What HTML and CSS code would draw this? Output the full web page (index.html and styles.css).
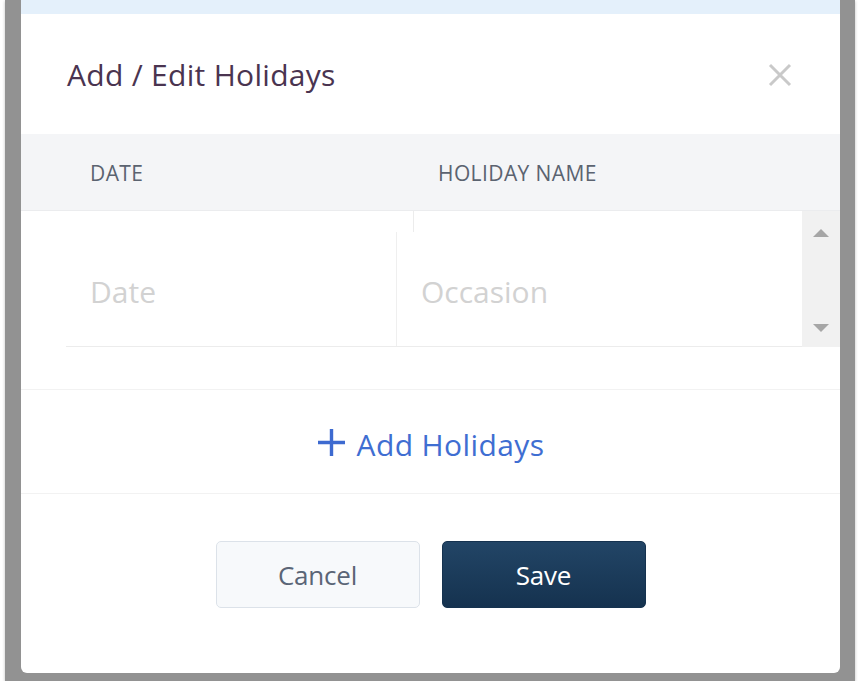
FILE: index.html
```html
<!DOCTYPE html>
<html>
<head>
<meta charset="utf-8">
<link rel="stylesheet" href="styles.css">
</head>
<body>
<div class="frame">
  <div class="dialog">
    <div class="topstrip"></div>
    <div class="header">
      <h1 class="title">Add / Edit Holidays</h1>
      <svg class="close" width="24" height="24" viewBox="0 0 24 24"><path d="M2 2L22 22M22 2L2 22" stroke="#c9c9c9" stroke-width="3" fill="none"/></svg>
    </div>
    <div class="thead">
      <div class="th th-date">DATE</div>
      <div class="th th-name">HOLIDAY NAME</div>
    </div>
    <div class="tbody">
      <div class="rows">
        <div class="stub"></div>
        <div class="row">
          <div class="cell cell-date">Date</div>
          <div class="cell cell-name">Occasion</div>
        </div>
      </div>
      <div class="scrollbar">
        <svg width="16" height="8" viewBox="0 0 16 8"><path d="M8 0L16 8H0Z" fill="#a6a6a6"/></svg>
        <svg width="16" height="8" viewBox="0 0 16 8"><path d="M0 0H16L8 8Z" fill="#a6a6a6"/></svg>
      </div>
    </div>
    <div class="add">
      <svg class="plus" width="29" height="29" viewBox="0 0 29 29"><path d="M14.5 1V28M1 14.5H28" stroke="#3d6ad0" stroke-width="3.4" fill="none"/></svg>
      <span>Add Holidays</span>
    </div>
    <div class="footer">
      <button class="btn btn-cancel">Cancel</button>
      <button class="btn btn-save">Save</button>
    </div>
  </div>
</div>
</body>
</html>
```
FILE: styles.css
```css
html, body {
  margin: 0;
  padding: 0;
  background: #ffffff;
}
body {
  font-family: "Open Sans", "Noto Sans", sans-serif;
}
.frame {
  margin-left: 5px;
  width: 819px;
  padding: 0 15px 8px 16px;
  background: #929292;
  box-shadow: 0 1px 3px rgba(0,0,0,0.25);
}
.dialog {
  background: #ffffff;
  height: 673px;
  border-radius: 0 0 6px 6px;
  overflow: hidden;
  display: flex;
  flex-direction: column;
}
.topstrip {
  height: 14px;
  background: #e4f0fb;
}
.header {
  height: 120px;
  display: flex;
  align-items: center;
  justify-content: space-between;
  padding: 0 48px 0 46px;
}
.title {
  margin: 0;
  font-size: 30px;
  font-weight: 400;
  color: #4a3450;
  letter-spacing: 0.3px;
}
.close {
  display: block;
  transform: translateY(1px);
}
.thead {
  height: 77px;
  background: #f4f5f7;
  border-bottom: 1px solid #ebecee;
  display: flex;
  align-items: center;
  padding-top: 2px;
  box-sizing: border-box;
}
.th {
  font-size: 21px;
  color: #5b6370;
  letter-spacing: 0.4px;
}
.th-date {
  width: 348px;
  padding-left: 69px;
}
.tbody {
  height: 136px;
  display: flex;
}
.rows {
  flex: 1;
  padding-left: 45px;
}
.stub {
  height: 21px;
  margin-left: 347px;
  border-left: 1px solid #ececec;
}
.row {
  height: 114px;
  border-bottom: 1px solid #ececec;
  display: flex;
}
.cell {
  display: flex;
  align-items: center;
  padding: 4px 0 0 24px;
  box-sizing: border-box;
  font-size: 30px;
  color: #d2d2d2;
}
.cell-date {
  width: 331px;
  border-right: 1px solid #efefef;
}
.cell-name {
  flex: 1;
}
.scrollbar {
  width: 38px;
  background: #f1f1f1;
  display: flex;
  flex-direction: column;
  align-items: center;
  justify-content: space-between;
  padding: 18px 0 15px;
  box-sizing: border-box;
}
.scrollbar svg {
  display: block;
}
.add {
  margin-top: 42px;
  height: 105px;
  border-top: 1px solid #f2f2f2;
  border-bottom: 1px solid #f2f2f2;
  display: flex;
  align-items: center;
  justify-content: center;
  gap: 11px;
  color: #3f6ed2;
  font-size: 30px;
  letter-spacing: 0.4px;
  padding-top: 6px;
  box-sizing: border-box;
}
.plus {
  display: block;
  transform: translateY(-2px);
}
.footer {
  display: flex;
  justify-content: center;
  gap: 22px;
  padding-top: 47px;
}
.btn {
  width: 204px;
  height: 67px;
  border-radius: 5px;
  font-family: "Open Sans", "Noto Sans", sans-serif;
  font-size: 26px;
  letter-spacing: -0.2px;
  cursor: pointer;
}
.btn-cancel {
  background: #f7f9fb;
  border: 1px solid #dce2e9;
  color: #5a6576;
}
.btn-save {
  background: linear-gradient(#224566, #15324f);
  border: 1px solid #15324f;
  color: #ffffff;
}
```
